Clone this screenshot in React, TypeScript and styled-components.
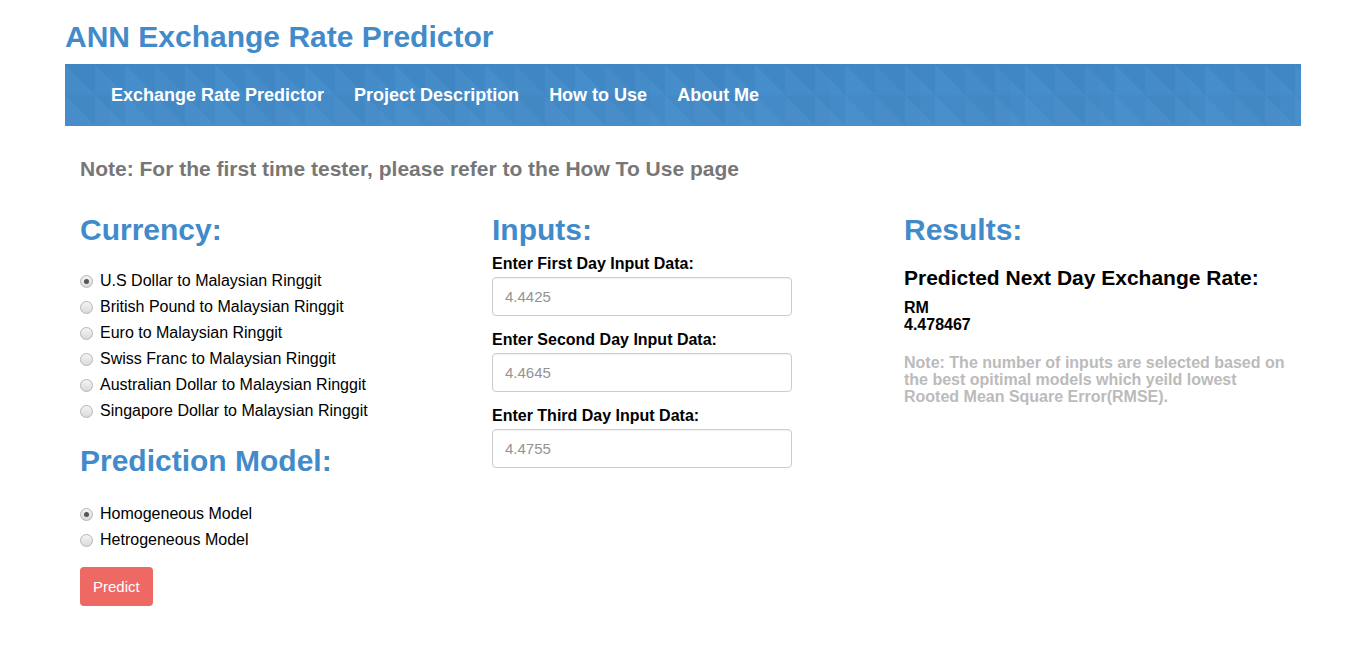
import React from "react";
import styled, { createGlobalStyle } from "styled-components";

const GlobalStyle = createGlobalStyle`
  body {
    margin: 0;
    background: #ffffff;
    font-family: "Liberation Sans", Arial, sans-serif;
    color: #000;
  }
`;

const Page = styled.div`
  width: 1236px;
  margin-left: 65px;
`;

const Title = styled.h1`
  margin: 20px 0 0;
  font-size: 30px;
  line-height: 33px;
  font-weight: 700;
  color: #428bca;
`;

const NavBar = styled.nav`
  margin-top: 11px;
  height: 62px;
  display: flex;
  align-items: center;
  gap: 30px;
  padding-left: 46px;
  background-color: #428bca;
  background-image: linear-gradient(
      to top right,
      rgba(255, 255, 255, 0.02) 50%,
      rgba(0, 0, 0, 0.025) 50%
    ),
    linear-gradient(to right, rgba(0, 0, 0, 0.015) 50%, transparent 50%),
    linear-gradient(to bottom, transparent 50%, rgba(255, 255, 255, 0.015) 50%);
  background-size: 30px 31px, 90px 62px, 60px 62px;
`;

const NavLink = styled.a`
  color: #ffffff;
  font-size: 18px;
  font-weight: 700;
  text-decoration: none;
`;

const Content = styled.div`
  padding-left: 15px;
`;

const Note = styled.p`
  margin: 31px 0 0;
  font-family: "Liberation Sans Narrow", "Liberation Sans", Arial, sans-serif;
  font-size: 21px;
  line-height: 24px;
  font-weight: 700;
  color: #777777;
`;

const Columns = styled.div`
  display: grid;
  grid-template-columns: 412px 412px 412px;
  margin-top: 32px;
`;

const Column = styled.div`
  display: flex;
  flex-direction: column;
`;

const Heading = styled.h2<{ $gap?: number }>`
  margin: 0 0 ${(p) => p.$gap ?? 0}px;
  font-size: 30px;
  line-height: 33px;
  font-weight: 700;
  color: #428bca;
`;

const RadioList = styled.div<{ $after: number }>`
  display: flex;
  flex-direction: column;
  margin-bottom: ${(p) => p.$after}px;
`;

const RadioRow = styled.label`
  display: flex;
  align-items: center;
  height: 26px;
  font-size: 16px;
  color: #000;
`;

const Radio = styled.span<{ $checked?: boolean }>`
  width: 11px;
  height: 11px;
  margin-right: 7px;
  border-radius: 50%;
  border: 1px solid #b5b5b5;
  background: linear-gradient(#f4f4f4, #dadada);
  display: flex;
  align-items: center;
  justify-content: center;

  &::after {
    content: "";
    display: ${(p) => (p.$checked ? "block" : "none")};
    width: 5px;
    height: 5px;
    border-radius: 50%;
    background: #555;
  }
`;

const FieldLabel = styled.label`
  display: block;
  font-size: 16px;
  line-height: 18px;
  font-weight: 700;
  margin-bottom: 4px;
`;

const Field = styled.div`
  margin-bottom: 15px;
`;

const Input = styled.input`
  box-sizing: border-box;
  width: 300px;
  height: 39px;
  padding: 6px 12px;
  border: 1px solid #cccccc;
  border-radius: 4px;
  font-family: "Liberation Sans", Arial, sans-serif;
  font-size: 15px;
  color: #555;
  box-shadow: inset 0 1px 1px rgba(0, 0, 0, 0.06);

  &::placeholder {
    color: #939393;
  }
`;

const ResultTitle = styled.h3`
  margin: 0;
  font-size: 21px;
  line-height: 24px;
  font-weight: 700;
`;

const ResultValue = styled.div`
  margin-top: 9px;
  font-size: 16px;
  line-height: 17px;
  font-weight: 700;
`;

const ResultNote = styled.p`
  margin: 21px 0 0;
  width: 390px;
  font-size: 16px;
  line-height: 17px;
  font-weight: 700;
  color: #bbbbbb;
`;

const Button = styled.button`
  align-self: flex-start;
  padding: 0 13px;
  height: 39px;
  border: none;
  border-radius: 4px;
  background: #ee6864;
  color: #ffffff;
  font-family: "Liberation Sans", Arial, sans-serif;
  font-size: 15px;
`;

const currencies = [
  "U.S Dollar to Malaysian Ringgit",
  "British Pound to Malaysian Ringgit",
  "Euro to Malaysian Ringgit",
  "Swiss Franc to Malaysian Ringgit",
  "Australian Dollar to Malaysian Ringgit",
  "Singapore Dollar to Malaysian Ringgit",
];

const models = ["Homogeneous Model", "Hetrogeneous Model"];

const inputs = [
  { label: "Enter First Day Input Data:", value: "4.4425" },
  { label: "Enter Second Day Input Data:", value: "4.4645" },
  { label: "Enter Third Day Input Data:", value: "4.4755" },
];

const App: React.FC = () => {
  return (
    <>
      <GlobalStyle />
      <Page>
        <Title>ANN Exchange Rate Predictor</Title>
        <NavBar>
          <NavLink>Exchange Rate Predictor</NavLink>
          <NavLink>Project Description</NavLink>
          <NavLink>How to Use</NavLink>
          <NavLink>About Me</NavLink>
        </NavBar>
        <Content>
          <Note>Note: For the first time tester, please refer to the How To Use page</Note>
          <Columns>
            <Column>
              <Heading $gap={22}>Currency:</Heading>
              <RadioList $after={20}>
                {currencies.map((c, i) => (
                  <RadioRow key={c}>
                    <Radio $checked={i === 0} />
                    {c}
                  </RadioRow>
                ))}
              </RadioList>
              <Heading $gap={24}>Prediction Model:</Heading>
              <RadioList $after={14}>
                {models.map((m, i) => (
                  <RadioRow key={m}>
                    <Radio $checked={i === 0} />
                    {m}
                  </RadioRow>
                ))}
              </RadioList>
              <Button>Predict</Button>
            </Column>
            <Column>
              <Heading $gap={9}>Inputs:</Heading>
              {inputs.map((f) => (
                <Field key={f.label}>
                  <FieldLabel>{f.label}</FieldLabel>
                  <Input placeholder={f.value} />
                </Field>
              ))}
            </Column>
            <Column>
              <Heading $gap={20}>Results:</Heading>
              <ResultTitle>Predicted Next Day Exchange Rate:</ResultTitle>
              <ResultValue>
                RM
                <br />
                4.478467
              </ResultValue>
              <ResultNote>
                Note: The number of inputs are selected based on the best opitimal models which
                yeild lowest Rooted Mean Square Error(RMSE).
              </ResultNote>
            </Column>
          </Columns>
        </Content>
      </Page>
    </>
  );
};

export default App;
